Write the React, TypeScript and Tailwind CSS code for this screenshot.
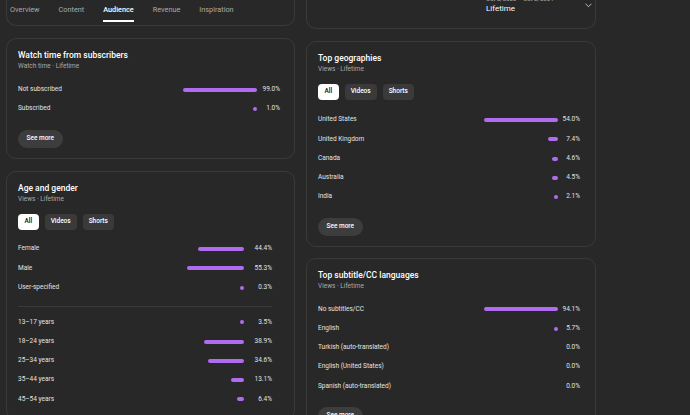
import React from "react";

type Item = { label: string; value: string; bar: number };

const font = { fontFamily: "Roboto, 'Noto Sans', sans-serif" };

const Bar = ({ width }: { width: number }) => (
	<div className="h-[4px] rounded-full bg-[#b06cf0]" style={{ width }} />
);

const Row = ({ item, valueClass }: { item: Item; valueClass: string }) => (
	<div className="flex h-[19.25px] items-center text-[6.5px] text-[#e3e3e3]">
		<span className="flex-1">{item.label}</span>
		{item.bar > 0 && <Bar width={item.bar} />}
		<span className={`text-right ${valueClass}`}>{item.value}</span>
	</div>
);

const Chips = ({ className }: { className: string }) => (
	<div className={`flex gap-[6px] text-[6.5px] font-medium ${className}`}>
		<span className="flex h-[16px] items-center rounded-[4px] bg-white px-[6.5px] text-[#0f0f0f]">
			All
		</span>
		<span className="flex h-[16px] items-center rounded-[4px] bg-[#3a3a3a] px-[6px] text-white">
			Videos
		</span>
		<span className="flex h-[16px] items-center rounded-[4px] bg-[#3a3a3a] px-[6px] text-white">
			Shorts
		</span>
	</div>
);

const SeeMore = ({ className }: { className: string }) => (
	<button
		className={`flex h-[18px] items-center rounded-full bg-[#3d3d3d] px-[8.5px] text-[6.5px] font-medium text-white ${className}`}
	>
		See more
	</button>
);

const CardHead = ({ title, sub }: { title: string; sub: string }) => (
	<>
		<h2 className="text-[8.5px] font-medium leading-[12px] text-white">{title}</h2>
		<p className="text-[6.5px] leading-[10px] text-[#aaaaaa]">{sub}</p>
	</>
);

const watch: Item[] = [
	{ label: "Not subscribed", value: "99.0%", bar: 74 },
	{ label: "Subscribed", value: "1.0%", bar: 4 },
];

const gender: Item[] = [
	{ label: "Female", value: "44.4%", bar: 46 },
	{ label: "Male", value: "55.3%", bar: 57 },
	{ label: "User-specified", value: "0.3%", bar: 4 },
];

const ages: Item[] = [
	{ label: "13–17 years", value: "3.5%", bar: 4 },
	{ label: "18–24 years", value: "38.9%", bar: 40 },
	{ label: "25–34 years", value: "34.6%", bar: 36 },
	{ label: "35–44 years", value: "13.1%", bar: 13 },
	{ label: "45–54 years", value: "6.4%", bar: 7 },
];

const geos: Item[] = [
	{ label: "United States", value: "54.0%", bar: 74 },
	{ label: "United Kingdom", value: "7.4%", bar: 10 },
	{ label: "Canada", value: "4.6%", bar: 6 },
	{ label: "Australia", value: "4.5%", bar: 6 },
	{ label: "India", value: "2.1%", bar: 4 },
];

const subs: Item[] = [
	{ label: "No subtitles/CC", value: "94.1%", bar: 74 },
	{ label: "English", value: "5.7%", bar: 4 },
	{ label: "Turkish (auto-translated)", value: "0.0%", bar: 0 },
	{ label: "English (United States)", value: "0.0%", bar: 0 },
	{ label: "Spanish (auto-translated)", value: "0.0%", bar: 0 },
];

const tabs = ["Overview", "Content", "Audience", "Revenue", "Inspiration"];

export default function App() {
	return (
		<div className="h-[415px] w-[690px] overflow-hidden bg-[#282828]" style={font}>
			<div className="flex items-start gap-[11px] pl-[6px]">
				{/* left column */}
				<div className="flex w-[289px] flex-col gap-[12px]">
					<nav className="flex h-[26px] gap-[19px] rounded-b-[10px] border-x border-b border-[#3a3a3a] pl-[3px] pt-[5px]">
						{tabs.map((t) => (
							<div key={t} className="flex flex-col">
								<span
									className={`text-[7.3px] leading-[10px] ${t === "Audience" ? "font-medium text-white" : "text-[#aaaaaa]"}`}
								>
									{t}
								</span>
								<span
									className={`mt-[5px] h-[2px] ${t === "Audience" ? "bg-white" : "bg-transparent"}`}
								/>
							</div>
						))}
					</nav>

					<section className="rounded-[10px] border border-[#3a3a3a] pb-[10px] pl-[11px] pr-[14px] pt-[10px]">
						<CardHead title="Watch time from subscribers" sub="Watch time · Lifetime" />
						<div className="mt-[9px]">
							{watch.map((i) => (
								<Row key={i.label} item={i} valueClass="w-[23px]" />
							))}
						</div>
						<SeeMore className="mt-[11px]" />
					</section>

					<section className="rounded-[10px] border border-[#3a3a3a] pb-[10px] pl-[11px] pr-[22px] pt-[10px]">
						<CardHead title="Age and gender" sub="Views · Lifetime" />
						<Chips className="mt-[10px]" />
						<div className="mt-[10px]">
							{gender.map((i) => (
								<Row key={i.label} item={i} valueClass="w-[28px]" />
							))}
						</div>
						<div className="mt-[9px] h-px bg-[#3a3a3a]" />
						<div className="mt-[5.5px]">
							{ages.map((i) => (
								<Row key={i.label} item={i} valueClass="w-[28px]" />
							))}
						</div>
					</section>
				</div>

				{/* right column */}
				<div className="flex w-[290px] flex-col gap-[11px]">
					<div className="mb-[1px] flex h-[29px] justify-end rounded-b-[10px] border-x border-b border-[#3a3a3a] pr-[3px]">
						<div className="-mt-[5px] w-[99px]">
							<p className="text-[6px] leading-[8px] text-[#aaaaaa]">Oct 5, 2023 – Oct 2, 2024</p>
							<p className="text-[8px] leading-[11px] text-white">Lifetime</p>
						</div>
						<svg width="7" height="5" viewBox="0 0 7 5" className="mt-[3px]">
							<path d="M0.6 0.8 L3.5 3.7 L6.4 0.8" fill="none" stroke="#cfcfcf" strokeWidth="0.9" />
						</svg>
					</div>

					<section className="rounded-[10px] border border-[#3a3a3a] pb-[10px] pl-[11px] pr-[15px] pt-[10px]">
						<CardHead title="Top geographies" sub="Views · Lifetime" />
						<Chips className="mt-[10px]" />
						<div className="mt-[10.5px]">
							{geos.map((i) => (
								<Row key={i.label} item={i} valueClass="w-[22px]" />
							))}
						</div>
						<SeeMore className="mt-[11px]" />
					</section>

					<section className="rounded-[10px] border border-[#3a3a3a] pb-[10px] pl-[11px] pr-[15px] pt-[10px]">
						<CardHead title="Top subtitle/CC languages" sub="Views · Lifetime" />
						<div className="mt-[9px]">
							{subs.map((i) => (
								<Row key={i.label} item={i} valueClass="w-[22px]" />
							))}
						</div>
						<SeeMore className="mt-[11px]" />
					</section>
				</div>
			</div>
		</div>
	);
}
